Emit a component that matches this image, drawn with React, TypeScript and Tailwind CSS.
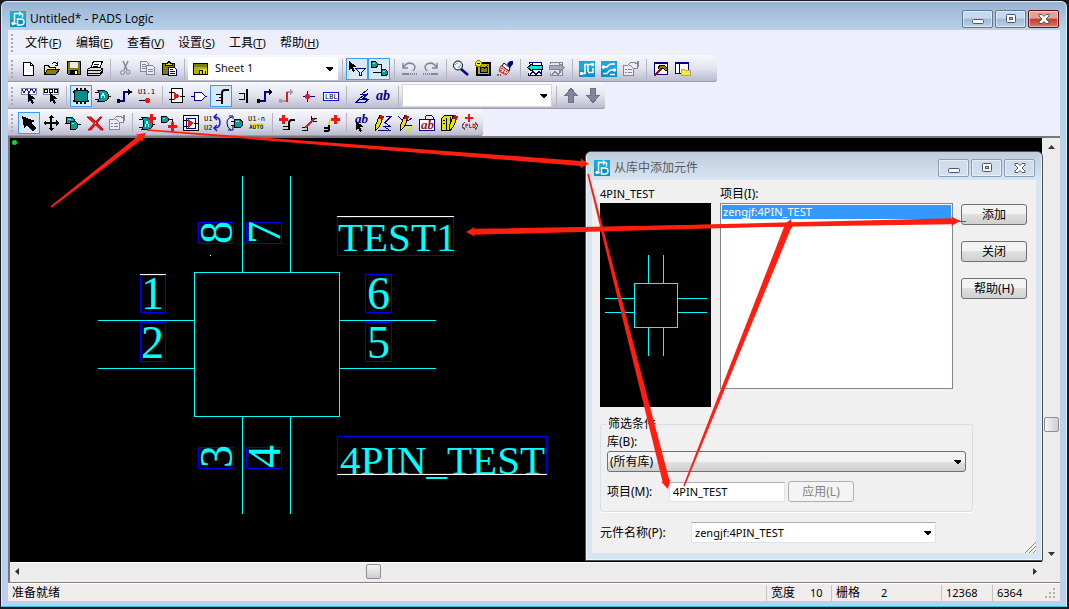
import React from "react";

const K = "#000";
const NAVY = "#00008b";
const RED = "#f01414";
const GREY = "#85859a";
const OLIVE = "#808000";

function Gate({ x, y, w = 9, h = 8 }: { x: number; y: number; w?: number; h?: number }) {
  return (
    <g>
      <path
        d={`M${x + 0.5} ${y + 0.5}h${w / 2}q${w / 2} 0 ${w / 2} ${h / 2}q0 ${h / 2} ${-w / 2} ${h / 2}h${-w / 2}z`}
        fill="#00a0a0"
        stroke={K}
      />
      <path d={`M${x + 2} ${y + 2}h${w / 3}`} stroke="#7ff0f0" />
    </g>
  );
}

function Plus({ x, y, c = RED }: { x: number; y: number; c?: string }) {
  return <path d={`M${x - 4} ${y + 0.5}h9M${x + 0.5} ${y - 4}v9`} stroke={c} strokeWidth="3" fill="none" />;
}

function Cursor({ x, y }: { x: number; y: number }) {
  return <path d={`M${x} ${y}v9l2 -2l2 4l2 -1l-2 -4h4z`} fill={K} />;
}

function Pencil({ x, y }: { x: number; y: number }) {
  return (
    <g transform={`translate(${x} ${y})`}>
      <path d="M4.500 .5l4 1l-4 10l-4 4v-5z" fill="#e8e000" stroke={K} />
      <path d="M5 0l4 1l-1 4l-4 -1z" fill="#c01010" />
      <path d="M0 16v-3l2 1z" fill={K} />
    </g>
  );
}

function Props() {
  return (
    <g fill="none" stroke={GREY}>
      <path d="M1.500 5.500h10v10h-10z" fill="#ececf4" />
      <path d="M3 9.500h2m1 0h4M3 12.500h2m1 0h4" />
      <path d="M5 6l4 -4h3l3 2v4h-4l-3 -3" fill="#ececf4" />
      <path d="M16 1v6" strokeWidth="2" />
    </g>
  );
}

function Tile({ children }: { children?: React.ReactNode }) {
  return (
    <g shapeRendering="auto">
      <rect x="1" y="1" width="16" height="16" fill="#14a8dc" />
      <rect x="1" y="10" width="16" height="7" fill="#0a90c4" />
      <g stroke="#fff" fill="none" strokeWidth="1.500">{children}</g>
    </g>
  );
}

function Logo() {
  return (
    <Tile>
      <path d="M5.500 12V3.500H12M2 13.500h5M13.500 3.500v4" />
      <path d="M8.500 9h3q3.500 0 3.500 3q0 3 -3.500 3h-3z" />
      <path d="M10 1l3.500 2.500L10 6zM3 11.500l5 2l-5 2z" fill="#fff" strokeWidth="0" />
    </Tile>
  );
}

const icons: Record<string, React.ReactNode> = {
  New: <path d="M3.500 2.500h7l3 3v10h-10zM10.500 2.500v3h3" fill="#fff" stroke={K} />,
  Open: (
    <g stroke={K}>
      <path d="M2.500 14.500v-9h4l1 2h6v2" fill="#f0ec80" />
      <path d="M2.500 14.500l3 -5h12l-4 5z" fill={OLIVE} />
      <path d="M10 4q3 -3 5 0M15.500 2v3h-3" fill="none" />
    </g>
  ),
  Save: (
    <g>
      <path d="M3.500 1.500h13v13h-12l-1 -1z" fill={OLIVE} stroke={K} />
      <rect x="6" y="2" width="8" height="6" fill="#e8e8e8" />
      <rect x="6" y="10" width="8" height="5" fill={K} />
      <rect x="11" y="11" width="2" height="3" fill="#fff" />
    </g>
  ),
  Print: (
    <g stroke={K}>
      <path d="M4.500 8l3 -6.500h9l-3 6.500" fill="#fff" />
      <path d="M8 4.500h5M7 6.500h5" />
      <path d="M1.500 9.500l3 -2h10l2 2v3l-3 3h-12z" fill="#dcdcdc" />
      <path d="M2 10.500h12l3 -2M2 13.500h12l3 -3" fill="none" />
      <rect x="9" y="11" width="3" height="1" fill="#e8e000" stroke="none" />
    </g>
  ),
  Cut: (
    <g stroke={GREY} fill="none" shapeRendering="auto">
      <path d="M7 1l4 9M12 1l-4 9" strokeWidth="1.500" />
      <circle cx="6.500" cy="12.500" r="2" />
      <circle cx="12" cy="12" r="2" />
    </g>
  ),
  Copy: (
    <g stroke={GREY} fill="#ececf4">
      <path d="M2.500 1.500h6l2 2v8h-8zM4 4.500h4M4 6.500h4M4 8.500h4" />
      <path d="M8.500 5.500h6l2 2v7h-8zM10 9.500h5M10 11.500h5" />
    </g>
  ),
  Paste: (
    <g>
      <path d="M2.500 3.500h12v11h-12z" fill={OLIVE} stroke={K} />
      <path d="M5.500 5.500v-2h2l1 -2h1l1 2h2v2z" fill="#e8e000" stroke={K} />
      <path d="M8.500 7.500h6l2 2v6h-8z" fill="#fff" stroke={NAVY} />
      <path d="M10 9.500h3M10 11.500h5M10 13.500h5" stroke={NAVY} />
    </g>
  ),
  Sheet: (
    <g>
      <rect x="1.500" y="3.500" width="14" height="11" fill="#b0b000" stroke={K} />
      <path d="M2 4h13v3H2z" fill={OLIVE} />
      <path d="M7 9h8v5H7z" fill="#e8e000" />
      <path d="M7.500 14v-3.500h3v3.500M13.500 14v-3" stroke={K} fill="none" />
    </g>
  ),
  Filter: (
    <g>
      <Cursor x={1} y={1} />
      <path d="M7.500 8.500h10l-4 4v3h-2v-3z" fill="#d8f4f8" stroke={NAVY} />
    </g>
  ),
  "Select gates": (
    <g>
      <Gate x={1} y={1} w={6} h={6} />
      <path d="M8 4.500h3.500v8M3 12.500h9" stroke={K} fill="none" />
      <Gate x={11} y={9} w={6} h={6} />
    </g>
  ),
  Undo: (
    <g stroke={GREY} fill="none">
      <path d="M3 3v5h5M3 8q4 -7 10 -4q4 3 0 7" strokeWidth="1.500" shapeRendering="auto" />
      <path d="M2 14h7" strokeWidth="2" />
      <path d="M10 14h8" strokeWidth="2" strokeDasharray="1 1" />
    </g>
  ),
  Redo: (
    <g stroke={GREY} fill="none">
      <path d="M15 3v5h-5M15 8q-4 -7 -10 -4q-4 3 0 7" strokeWidth="1.500" shapeRendering="auto" />
      <path d="M9 14h7" strokeWidth="2" />
      <path d="M1 14h8" strokeWidth="2" strokeDasharray="1 1" />
    </g>
  ),
  Zoom: (
    <g shapeRendering="auto">
      <path d="M9 9l7 6" stroke={NAVY} strokeWidth="2.500" />
      <circle cx="6" cy="5.500" r="4.500" fill="#dffafa" stroke={K} />
      <path d="M3 5l2 -2M6 8l3 -3" stroke="#12c8d0" />
    </g>
  ),
  "Zoom board": (
    <g>
      <rect x="3" y="3" width="13" height="12" fill="#b8b000" stroke={K} strokeWidth="2" />
      <rect x="6.500" y="7.500" width="7" height="5" fill={OLIVE} stroke={K} />
      <path d="M10 9l4 -4" stroke={K} />
      <circle cx="4.500" cy="3.500" r="3" fill="#ffee00" stroke={OLIVE} />
      <path d="M3 3.500h3" stroke={K} />
    </g>
  ),
  Redraw: (
    <g shapeRendering="auto">
      <path d="M11 4l3 -3h3v3l-3 4z" fill={NAVY} />
      <path d="M8 3l6 5l-1 3l-7 -5z" fill="#fff" stroke={K} />
      <path d="M5 5.500l8 6l-3 3.500l-7 -4z" fill="#fff" stroke="#a03030" />
      <path d="M5 8l6 4M4 10l6 4M1 15l4 0" stroke={RED} strokeWidth="1.500" strokeDasharray="2 1" />
    </g>
  ),
  Previous: (
    <g>
      <path d="M3.500 3.500v-1h12v13h-13v-3M4 14.500l3 -3l3 3l3 -3l3 3" fill="#fff" stroke={NAVY} />
      <path d="M1.500 7.500l5 -4v2h10v4h-10v2z" fill="#00e5ee" stroke={K} />
    </g>
  ),
  Next: (
    <g>
      <path d="M2.500 3.500v-1h12v13h-12v-3M4 14.500l3 -3l3 3l3 -3" fill="#e3e3ee" stroke={GREY} />
      <path d="M16.500 7.500l-5 -4v2h-10v4h10v2z" fill="#a8a8b6" stroke={GREY} />
    </g>
  ),
  Layout: (
    <Tile>
      <path d="M3 13.500h4V4.500M10 12V4.500h5M6 4.500h3M10 12.500h5V8" />
      <circle cx="3.500" cy="13.500" r="1" fill="#fff" />
      <circle cx="14.500" cy="4.500" r="1" fill="#fff" />
    </Tile>
  ),
  Router: (
    <Tile>
      <path d="M3 7h4q2 -3 5 -3h3M3 13.500h4q2 -3.500 5 -3.500h3M10 14.500h5" />
      <circle cx="3.500" cy="7" r="1" fill="#fff" />
      <circle cx="14.500" cy="10" r="1" fill="#fff" />
    </Tile>
  ),
  Properties: <Props />,
  Tools: (
    <g>
      <rect x="2.500" y="2.500" width="13" height="12" fill="#fff" stroke={NAVY} />
      <path d="M2 3h14" stroke={NAVY} strokeWidth="2" />
      <path d="M6 8l2 -3h4l3 3v2h-2l-2 -2l-3 2z" fill={OLIVE} stroke={K} />
      <path d="M9 9l-7 7" stroke="#8b1010" strokeWidth="2" />
    </g>
  ),
  Output: (
    <g>
      <rect x="1.500" y="2.500" width="13" height="11" fill="#fff" stroke={NAVY} />
      <path d="M1 3h14" stroke={NAVY} strokeWidth="2" />
      <path d="M5.500 4v9" stroke={NAVY} />
      <path d="M7.500 15.500v-6h3l1 1h5v5z" fill="#ffe92e" stroke="#a8a878" />
    </g>
  ),
  "Select nets": (
    <g>
      <rect x="1.500" y="1.500" width="15" height="6" fill="#fff" stroke={GREY} />
      <path d="M2 2l2 4l2 -4h1l2 4l2 -4h1l2 4l2 -4" fill="none" stroke="#1010e0" />
      <Cursor x={8} y={6} />
    </g>
  ),
  "Select parts": (
    <g>
      <rect x="1.500" y="1.500" width="15" height="6" fill="#fff" stroke={GREY} />
      <path d="M2.500 2.500h3v3h-3zM7.500 2.500h3v3h-3zM12.500 2.500h3v3h-3z" fill="#fff" stroke={K} />
      <Cursor x={8} y={6} />
    </g>
  ),
  Part: (
    <g>
      <path d="M4.500 1v16M8.500 1v16M12.500 1v16M1 4.500h16M1 13.500h16" stroke={K} strokeWidth="2" />
      <rect x="2.500" y="3.500" width="13" height="11" fill="#008f8f" stroke={K} />
    </g>
  ),
  "Gate symbol": (
    <g>
      <path d="M1 5.500h4M1 12.500h4M13 9.500h4" stroke={K} />
      <path d="M3.500 3.500h6q5 1 5 5.500q0 5 -5 5.500h-6l2 -3v-5z" fill="#00a0a0" stroke={K} />
      <path d="M7 11l2 -5l2 5" fill="none" stroke="#bff" />
    </g>
  ),
  Net: (
    <g>
      <path d="M2 14h6V5h8" fill="none" stroke={NAVY} strokeWidth="2" />
      <path d="M1 12h3v4h-3zM12 2l4 3l-4 3z" fill={K} />
    </g>
  ),
  Pin: (
    <g>
      <text x="0" y="7" fontSize="7" fontFamily="DejaVu Sans Mono, monospace" fill={K}>U1.1</text>
      <path d="M1 13.500h8" stroke={K} />
      <circle cx="9.500" cy="13.500" r="2.500" fill={RED} />
    </g>
  ),
  "Hierarchical part": (
    <g>
      <path d="M3.500 1.500h11v14h-11z" fill="#fff" stroke={K} />
      <path d="M6 5l6 4l-6 4z" fill={RED} />
      <path d="M1 5.500h5M1 12.500h5M12 9.500h5" stroke={K} />
    </g>
  ),
  Port: <path d="M1 9.500h3M4.500 5.500h7l4 4l-4 4h-7zM15 9.500h2" fill="#fff" stroke={NAVY} />,
  Bus: (
    <g fill="none" stroke={K}>
      <path d="M10 17V6q0 -3 3 -3h4" strokeWidth="2" shapeRendering="auto" />
      <path d="M4 7.500h5M4 13.500h5M7 10.500h2" />
    </g>
  ),
  "Bus pins": (
    <g fill="none" stroke={K}>
      <path d="M13 2v14" strokeWidth="2" />
      <path d="M5 6.500h5v6h-5" />
    </g>
  ),
  Connection: (
    <g>
      <path d="M3 14h6V5h6" fill="none" stroke={NAVY} strokeWidth="2" />
      <path d="M1 12h3v4h-3zM13 2l4 3l-4 3z" fill={K} />
    </g>
  ),
  Segment: (
    <g>
      <path d="M2 14h6M9 5h5" fill="none" stroke="#a0a0a8" strokeWidth="2" />
      <path d="M9 5v10" stroke={RED} strokeWidth="2" />
      <path d="M1 12h3v4h-3zM12 2l4 3l-4 3z" fill="#a0a0a8" />
    </g>
  ),
  Junction: (
    <g>
      <path d="M3 9.500h12M7.500 4v11" stroke={NAVY} />
      <circle cx="7.500" cy="9.500" r="2.500" fill={RED} />
    </g>
  ),
  Label: (
    <g>
      <rect x="1.500" y="5.500" width="15" height="8" fill="#fff" stroke="#1010e0" />
      <text x="3" y="12" fontSize="7" fontFamily="DejaVu Sans Mono, monospace" fill={K}>LBL</text>
    </g>
  ),
  "Drawing item": (
    <path d="M3 15.500h10l3 -3h-9l-3 3M7 11.500l7 -4h-5l7 -5M16 6.500l-5 5h4" fill="none" stroke={NAVY} />
  ),
  Text: (
    <text x="2" y="13" fontSize="14" fontStyle="italic" fontWeight="700" fontFamily="Liberation Serif, serif" fill={NAVY}>ab</text>
  ),
  Up: <path d="M9 1.500l6.500 7h-4v7h-5v-7h-4z" fill={GREY} stroke="#70708a" />,
  Down: <path d="M9 15.500l6.500 -7h-4v-7h-5v7h-4z" fill={GREY} stroke="#70708a" />,
  Select: <path d="M2 2l2 12l3 -2l6 5l3 -3l-5 -5l4 -2z" fill={K} />,
  Move: (
    <g fill={K}>
      <path d="M8 3h2v12h-2zM3 8h12v2h-12z" />
      <path d="M9 1l3 3h-6zM9 17l3 -3h-6zM1 9l3 -3v6zM17 9l-3 -3v6z" />
    </g>
  ),
  Duplicate: (
    <g>
      <Gate x={2} y={3} w={8} h={6} />
      <Gate x={6} y={7} w={7} h={8} />
      <path d="M1 9.500h5M13 10.500h4" stroke={K} />
    </g>
  ),
  Delete: <path d="M1 3h4l12 12v1h-2zM16 3h-2l-12 13h3z" fill={RED} stroke="#c01010" shapeRendering="auto" />,
  "Add part": (
    <g>
      <path d="M1 5.500h4M1 13.500h4M13 10.500h4" stroke={K} />
      <path d="M3.500 3.500h5q6 1 6 6q0 6 -6 6h-5l2 -3v-6z" fill="#00a0a0" stroke={K} />
      <path d="M7 13l2 -6l2 6" fill="none" stroke="#bff" />
      <Plus x={13} y={4} />
    </g>
  ),
  "Add connection": (
    <g>
      <Gate x={1} y={2} w={7} h={6} />
      <path d="M9 5.500h3.500v4" fill="none" stroke={K} />
      <Plus x={12} y={12} />
    </g>
  ),
  "Add hierarchical": (
    <g>
      <path d="M1.500 1.500h15v15h-15z" fill="#d8ffff" stroke={K} />
      <path d="M4.500 4.500h9v10h-9z" fill="#fff" stroke={NAVY} />
      <path d="M6 5l6 4l-6 5z" fill={RED} />
      <path d="M1 6.500h5M1 12.500h5M12 9.500h5" stroke={K} />
    </g>
  ),
  "Swap refs": (
    <g>
      <text x="0" y="7" fontSize="7" fontFamily="DejaVu Sans Mono, monospace" fill={K}>U1</text>
      <text x="0" y="16" fontSize="7" fontFamily="DejaVu Sans Mono, monospace" fill={K}>U2</text>
      <path d="M10 3q6 0 6 5q0 6 -5 6M13 11l-3 3l3 3M13 0l-3 3l3 3" fill="none" stroke="#2020b8" strokeWidth="1.500" shapeRendering="auto" />
    </g>
  ),
  "Swap pins": (
    <g>
      <path d="M6 3q-5 1 -5 6q0 5 4 7M3 2h4v3M2 16h5v-4" fill="none" stroke={NAVY} shapeRendering="auto" />
      <Gate x={8} y={5} w={8} h={8} />
      <path d="M5 7.500h4M5 11.500h4" stroke={K} />
    </g>
  ),
  Renumber: (
    <g>
      <text x="0" y="7" fontSize="7" fontFamily="DejaVu Sans Mono, monospace" fill={K}>U1-n</text>
      <rect x="1" y="9" width="15" height="7" fill="#ffee00" />
      <text x="1" y="15" fontSize="6" fontWeight="700" fontFamily="DejaVu Sans Mono, monospace" fill="#1010e0">AUTO</text>
    </g>
  ),
  "Add bus": (
    <g>
      <path d="M11 16V9q0 -3 3 -3h3" fill="none" stroke={K} strokeWidth="2" shapeRendering="auto" />
      <path d="M5 12.500h5M5 15.500h5" stroke={K} />
      <Plus x={5} y={5} />
    </g>
  ),
  "Split bus": (
    <g>
      <path d="M11.500 2v5h5M12 4.500h5M7.500 17v-5M2 13.500h5M2 16.500h5" fill="none" stroke={K} />
      <path d="M5 14l9 -9" stroke={RED} strokeWidth="2" />
    </g>
  ),
  "Extend bus": (
    <g>
      <path d="M7 17v-6M2 13.500h5M2 16.500h5" fill="none" stroke={K} strokeWidth="2" />
      <path d="M7 11q0 -6 6 -6" fill="none" stroke="#e8e000" strokeWidth="2" />
      <Plus x={13} y={5} />
    </g>
  ),
  "Edit text": (
    <g>
      <text x="3" y="9" fontSize="13" fontStyle="italic" fontWeight="700" fontFamily="Liberation Serif, serif" fill={NAVY}>ab</text>
      <Cursor x={4} y={7} />
    </g>
  ),
  "Draw line": (
    <g>
      <path d="M4 16.500h12l-6 -4h6l-5 -4l6 -6h-5" fill="none" stroke={NAVY} />
      <Pencil x={1} y={1} />
    </g>
  ),
  "Modify line": (
    <g>
      <path d="M2 2l5 5M8 9l8 -5M8 11.500h8" fill="none" stroke={NAVY} />
      <path d="M10 16q6 0 6 -4" fill="none" stroke="#e8e000" strokeWidth="2" />
      <Pencil x={4} y={1} />
    </g>
  ),
  "Lock text": (
    <g>
      <path d="M7 5v-2l2 -2h4l2 2v2" fill="none" stroke={NAVY} />
      <rect x="1.500" y="5.500" width="15" height="11" fill="#fff" stroke={NAVY} />
      <text x="3" y="15" fontSize="13" fontStyle="italic" fontWeight="700" fontFamily="Liberation Serif, serif" fill="#a01020">ab</text>
    </g>
  ),
  Library: (
    <g>
      <path d="M1.500 4.500l3 -3h8v12l-2 3h-9z" fill="#e8e000" stroke={K} />
      <path d="M6.500 4v12M10.500 3v12M3 6.500h2M3 9.500h2" stroke={K} />
      <Pencil x={9} y={1} />
    </g>
  ),
  "Add field": (
    <g>
      <path d="M7 0v8M3 4h8" stroke={RED} strokeWidth="2" />
      <path d="M3 8l-3 4l3 4M13 8l3 4l-3 4" fill="none" stroke="#804040" />
      <text x="3" y="14" fontSize="6" fontWeight="700" fontFamily="DejaVu Sans Mono, monospace" fill="#a01020">FLD</text>
    </g>
  ),
};

function Icon({ name }: { name: string }) {
  return (
    <svg width="18" height="18" viewBox="0 0 18 18" shapeRendering="crispEdges" className="block shrink-0 overflow-visible" fill="none" aria-hidden="true">
      {icons[name]}
    </svg>
  );
}

function Tool({ name, on = false }: { name: string; on?: boolean }) {
  return (
    <button
      type="button"
      aria-label={name}
      className={
        on
          ? "flex h-[22px] w-[22px] items-center justify-center border border-[#3c9cf0] bg-[#d6e8fa]"
          : "flex h-[22px] w-[22px] items-center justify-center"
      }
    >
      <Icon name={name} />
    </button>
  );
}

function Sep() {
  return (
    <span className="flex h-5 w-2 justify-center">
      <span className="w-px bg-[#b4b4c0]" />
    </span>
  );
}

function Grip() {
  return (
    <span className="mr-[4px] flex w-[3px] flex-col gap-[2px]">
      {[0, 1, 2, 3, 4].map((i) => (
        <span key={i} className="h-[2px] w-[2px] bg-[#a9a9b8]" />
      ))}
    </span>
  );
}

function Group({ names, active = [] }: { names: string[]; active?: string[] }) {
  return (
    <div className="flex">
      {names.map((n) => (
        <Tool key={n} name={n} on={active.includes(n)} />
      ))}
    </div>
  );
}

function Bar({ children, end = false }: { children: React.ReactNode; end?: boolean }) {
  return (
    <div
      className={
        "flex h-[27px] w-max items-center rounded-r-[3px] bg-gradient-to-b from-[#f8f9fd] via-[#e2e3ee] to-[#b8b8cc] pl-[3px] shadow-[inset_0_-1px_0_#9a9aae] " +
        (end ? "pr-[23px]" : "pr-px")
      }
    >
      {children}
    </div>
  );
}

function Caret() {
  return (
    <svg width="7" height="4" viewBox="0 0 7 4" shapeRendering="crispEdges" className="pointer-events-none absolute right-[5px] top-1/2 -mt-[2px]" aria-hidden="true">
      <path d="M0 0h7v1L4 4H3L0 1z" fill={K} />
    </svg>
  );
}

function CaptionButtons({ active }: { active: boolean }) {
  const base = "flex h-[18px] w-[31px] items-center justify-center rounded-[2px] border shadow-[inset_0_0_0_1px_rgba(255,255,255,0.5)]";
  const plain = active
    ? " border-[#5d7896] bg-gradient-to-b from-[#c6d8ea] from-45% via-[#9db9d5] via-50% to-[#b9d3ea]"
    : " border-[#8c9db4] bg-gradient-to-b from-[#cfdbe8] to-[#d4e0ee]";
  const close = active
    ? " border-[#5a1220] bg-gradient-to-b from-[#e5a297] from-45% via-[#c0392b] via-50% to-[#d97860]"
    : plain;
  return (
    <div className="flex gap-[2px]">
      <button type="button" aria-label="Minimize" className={base + plain}>
        <svg width="12" height="12" viewBox="0 0 12 12"><rect x=".5" y="6.500" width="11" height="4" rx="1" fill="#fff" stroke="#4d566b" /></svg>
      </button>
      <button type="button" aria-label="Restore" className={base + plain}>
        <svg width="12" height="12" viewBox="0 0 12 12">
          <rect x="1.500" y="1.500" width="9" height="8" rx="1" fill="#fff" stroke="#4d566b" />
          <rect x="4.500" y="4.500" width="3" height="2" fill="#b8c8dc" stroke="#4d566b" />
        </svg>
      </button>
      <button type="button" aria-label="Close" className={base + close}>
        <svg width="12" height="12" viewBox="0 0 12 12">
          <path d="M1 1.500h3l2 2l2 -2h3v1.500l-3 3l3 3v1.500h-3l-2 -2l-2 2h-3v-1.500l3 -3l-3 -3z" fill="#fff" stroke="#4d566b" />
        </svg>
      </button>
    </div>
  );
}

const menus: [string, string][] = [
  ["文件", "F"],
  ["编辑", "E"],
  ["查看", "V"],
  ["设置", "S"],
  ["工具", "T"],
  ["帮助", "H"],
];

function Schematic() {
  const digits: [string, number, number][] = [
    ["1", 141, 309],
    ["2", 141, 358],
    ["6", 367, 309],
    ["5", 367, 358],
  ];
  const turned: [string, number, number][] = [
    ["8", 232, 244],
    ["7", 280, 244],
    ["3", 232, 468],
    ["4", 280, 468],
  ];
  return (
    <svg className="absolute inset-0 h-full w-full" aria-label="Schematic">
      <g transform="translate(-10 -138)" fontFamily="Liberation Serif, serif">
        <circle cx="14.500" cy="142.500" r="2.500" fill="#00e020" />
        <rect x="210" y="255" width="1" height="1" fill="#fff" />
        <g fill="none" stroke="#0000f0">
          <path d="M140.500 275.500h25v37h-25zM140.500 322.500h25v39h-25zM365.500 274.500h26v38h-26zM365.500 322.500h26v39h-26z" />
          <path d="M198.500 222.500h35v21h-35zM246.500 222.500h35v21h-35zM198.500 447.500h35v21h-35zM246.500 447.500h35v21h-35z" />
          <path d="M337.500 217.500h116v38h-116zM337.500 436.500h209v37h-209z" />
        </g>
        <path d="M140 274.500h26M337 216.500h117M337 474.500h210" stroke="#fff" />
        <g fill="none" stroke="#00ffff">
          <rect x="194.500" y="272.500" width="145" height="144" />
          <path d="M242.500 176v96M290.500 176v96M242.500 417v97M290.500 417v97M98 320.500h96M98 368.500h96M340 320.500h96M340 368.500h96" />
        </g>
        <g fill="#00ffff" fontSize="46">
          {digits.map(([t, x, y]) => (
            <text key={t} x={x} y={y}>{t}</text>
          ))}
          {turned.map(([t, x, y]) => (
            <text key={t} transform={`translate(${x} ${y}) rotate(-90)`}>{t}</text>
          ))}
        </g>
        <g fill="#00ffff" fontSize="41">
          <text x="338" y="251">TEST1</text>
          <text x="340" y="474">4PIN_TEST</text>
        </g>
      </g>
    </svg>
  );
}

function arrow(x1: number, y1: number, x2: number, y2: number, w: number) {
  const len = Math.hypot(x2 - x1, y2 - y1);
  const ux = (x2 - x1) / len;
  const uy = (y2 - y1) / len;
  const at = (d: number, s: number) => `${x1 + ux * d - uy * s},${y1 + uy * d + ux * s}`;
  const neck = len - 8;
  return [at(0, 0.8), at(neck, w / 2), at(neck - 1, 5), at(len, 0), at(neck - 1, -5), at(neck, -w / 2), at(0, -0.8)].join(" ");
}

function Arrows() {
  return (
    <svg className="pointer-events-none absolute inset-0 h-full w-full" fill="#ff1e10" aria-hidden="true">
      <polygon points={arrow(51, 207, 146, 133, 5)} />
      <polygon points={arrow(147, 130, 589, 164, 5)} />
      <polygon points={arrow(588, 174, 668, 489, 7)} />
      <polygon points={arrow(684, 486, 791, 219, 7)} />
      <polygon points={arrow(960, 221, 466, 232, 6)} />
      <polygon points={arrow(560, 229, 960, 221, 6)} />
      <path d="M958 221.500h8" stroke="#ff1e10" />
    </svg>
  );
}

const pushButton =
  "h-[21px] w-[66px] rounded-[3px] border text-center text-[12px] leading-[19px] bg-gradient-to-b from-50% via-50%";
const live = " border-[#707070] from-[#f3f3f3] via-[#e0e0e0] to-[#d0d0d0]";
const dead = " border-[#adb2b5] from-[#f4f4f4] via-[#f4f4f4] to-[#f4f4f4] text-[#838383]";

function Dialog() {
  return (
    <section
      aria-label="从库中添加元件"
      className="absolute left-[585px] top-[151px] flex w-[458px] flex-col rounded-t-[6px] border border-[#4a5058] bg-[#d7e4f2] px-[6px] pb-[7px] text-[12px] text-black shadow-[inset_0_0_0_1px_rgba(255,255,255,0.6)]"
    >
      <header className="-mx-[5px] flex h-[28px] items-center rounded-t-[5px] bg-gradient-to-b from-[#bfccda] to-[#d7e4f2] px-[6px] pt-[4px]">
        <svg width="18" height="18" viewBox="0 0 18 18" aria-hidden="true"><Logo /></svg>
        <h2 className="ml-[3px] flex-1 text-[12px] leading-4 text-[#555b63]">从库中添加元件</h2>
        <CaptionButtons active={false} />
      </header>
      <div className="bg-[#f0f0f0] px-[8px] pb-[10px] pt-[5px]">
        <div className="flex">
          <div className="w-[111px]">
            <p className="h-[18px] text-[11px] leading-[18px]">4PIN_TEST</p>
            <svg className="block h-[204px] w-full bg-black" aria-label="Part preview">
              <g fill="none" stroke="#00ffff">
                <rect x="34.500" y="80.500" width="43" height="44" />
                <path d="M48.500 52v28M63.500 52v28M48.500 125v28M63.500 125v28M5 95.500h29M5 109.500h29M78 95.500h29M78 109.500h29" />
              </g>
            </svg>
          </div>
          <div className="ml-[9px] w-[233px]">
            <p className="h-[18px] leading-[18px]" id="items-label">项目(I):</p>
            <ul role="listbox" aria-labelledby="items-label" className="h-[186px] border border-[#82878f] bg-white p-px">
              <li role="option" aria-selected="true" className="h-[14px] bg-[#3399ff] px-px text-[11px] leading-[14px] text-white">
                zengjf:4PIN_TEST
              </li>
            </ul>
          </div>
          <div className="ml-[8px] flex flex-col gap-4 pt-[19px]">
            <button type="button" className={pushButton + live}>添加</button>
            <button type="button" className={pushButton + live}>关闭</button>
            <button type="button" className={pushButton + live}>帮助(H)</button>
          </div>
        </div>
        <fieldset className="mr-[55px] mt-[9px] rounded-[3px] border border-[#d5dfe5] px-[6px] pb-[9px] shadow-[0_1px_0_#fff]">
          <legend className="h-4 px-px leading-4">筛选条件</legend>
          <label htmlFor="lib" className="mt-[2px] block h-[17px] leading-4">库(B):</label>
          <div className="relative">
            <select
              id="lib"
              className="block h-[21px] w-full appearance-none rounded-[3px] border border-[#707070] bg-gradient-to-b from-[#f2f2f2] from-50% via-[#e2e2e2] via-50% to-[#cfcfcf] px-[2px] text-[12px] leading-[19px]"
            >
              <option>(所有库)</option>
            </select>
            <Caret />
          </div>
          <div className="mt-[9px] flex items-center">
            <label htmlFor="item" className="w-[62px]">项目(M):</label>
            <input id="item" defaultValue="4PIN_TEST" className="h-[20px] w-[116px] border border-[#dfe3ea] border-t-[#abadb3] bg-white px-[3px] text-[11px]" />
            <button type="button" disabled className={pushButton + dead + " ml-[3px]"}>
              应用(L)
            </button>
          </div>
        </fieldset>
        <div className="mt-[10px] flex items-center">
          <label htmlFor="part" className="w-[91px]">元件名称(P):</label>
          <div className="relative w-[245px]">
            <select id="part" className="block h-[21px] w-full appearance-none border border-[#dfe3ea] border-t-[#abadb3] bg-white px-[3px] text-[11px] leading-[19px]">
              <option>zengjf:4PIN_TEST</option>
            </select>
            <Caret />
          </div>
        </div>
      </div>
      <svg width="12" height="12" viewBox="0 0 12 12" className="absolute bottom-[7px] right-[6px]" aria-hidden="true">
        <path d="M1 12L12 1M5 12l7 -7M9 12l3 -3" stroke="#8a8a8a" />
      </svg>
    </section>
  );
}

const cell = "flex h-full items-center border-l border-[#c8c4c4] pl-[4px]";

export default function App() {
  return (
    <div className="relative flex min-h-screen flex-col bg-[#1b1b22] pb-[2px] pl-px pr-[2px] pt-px font-['Noto_Sans','Noto_Sans_CJK_SC',sans-serif] text-[12px] text-black">
      <div className="flex flex-1 flex-col rounded-t-[6px] border border-[#d5effa] border-b-[#3ec0d8] bg-[#b9d1ea] px-[6px] pb-[5px]">
        <header className="-mx-[6px] flex h-[28px] items-center rounded-t-[5px] bg-gradient-to-b from-[#98b3d2] to-[#b9d1ea] px-[7px] pt-[5px]">
          <svg width="18" height="18" viewBox="0 0 18 18" aria-hidden="true"><Logo /></svg>
          <h1 className="ml-[3px] flex-1 font-['Open_Sans','Noto_Sans_CJK_SC',sans-serif] text-[12px] leading-4">Untitled* - PADS Logic</h1>
          <CaptionButtons active />
        </header>
        <main className="flex flex-1 flex-col bg-[#eeeffc]">
          <nav className="flex h-[25px] items-center pl-[3px]">
            <Grip />
            <div className="ml-[7px] flex">
              {menus.map(([label, key]) => (
                <button key={key} type="button" className="w-[51px] whitespace-nowrap text-left leading-4">
                  {label}
                  <span className="text-[11px]">(<span className="underline">{key}</span>)</span>
                </button>
              ))}
            </div>
          </nav>
          <div className="flex flex-col">
            <Bar end>
              <Grip />
              <Group names={["New", "Open", "Save", "Print"]} />
              <Sep />
              <Group names={["Cut", "Copy", "Paste"]} />
              <Sep />
              <div className="relative flex h-[23px] w-[150px] items-center bg-white pl-[4px]">
                <Icon name="Sheet" />
                <select aria-label="Sheet" className="h-full flex-1 appearance-none bg-transparent pl-[5px] font-['Open_Sans',sans-serif] text-[11px]">
                  <option>Sheet 1</option>
                </select>
                <Caret />
              </div>
              <Sep />
              <Group names={["Filter", "Select gates"]} active={["Filter", "Select gates"]} />
              <Sep />
              <Group names={["Undo", "Redo"]} />
              <Sep />
              <Group names={["Zoom", "Zoom board", "Redraw"]} />
              <Sep />
              <Group names={["Previous", "Next"]} />
              <Sep />
              <Group names={["Layout", "Router", "Properties"]} />
              <Sep />
              <Group names={["Tools", "Output"]} />
            </Bar>
            <Bar>
              <Grip />
              <Group names={["Select nets", "Select parts"]} />
              <Sep />
              <Group names={["Part", "Gate symbol", "Net", "Pin"]} active={["Part"]} />
              <Sep />
              <Group
                names={["Hierarchical part", "Port", "Bus", "Bus pins", "Connection", "Segment", "Junction", "Label"]}
                active={["Bus"]}
              />
              <Sep />
              <Group names={["Drawing item", "Text"]} />
              <Sep />
              <div className="relative w-[150px]">
                <select aria-label="Search" className="block h-[23px] w-full appearance-none border border-[#d4d4de] bg-white px-1 text-[11px]">
                  <option></option>
                </select>
                <Caret />
              </div>
              <Sep />
              <Group names={["Up", "Down"]} />
            </Bar>
            <Bar>
              <Grip />
              <Group names={["Select", "Move", "Duplicate", "Delete", "Properties"]} active={["Select"]} />
              <Sep />
              <Group names={["Add part", "Add connection", "Add hierarchical", "Swap refs", "Swap pins", "Renumber"]} />
              <Sep />
              <Group names={["Add bus", "Split bus", "Extend bus"]} />
              <Sep />
              <Group names={["Edit text", "Draw line", "Modify line", "Lock text", "Library", "Add field"]} />
            </Bar>
          </div>
          <div className="flex flex-1 border-l-2 border-t-2 border-[#77777c] bg-[#f0f0f0]">
            <div className="flex flex-1 flex-col">
              <div className="relative flex-1 bg-black">
                <Schematic />
              </div>
              <div className="flex h-[20px] items-center justify-between border-t border-white bg-[#ececec] px-[5px] pb-[2px]">
                <svg width="4" height="7" viewBox="0 0 4 7" aria-hidden="true"><path d="M4 0v7L0 3.500z" fill="#333" /></svg>
                <div className="flex flex-1 pl-[34%]">
                  <span className="h-[15px] w-[15px] rounded-[2px] border border-[#8e8e94] bg-gradient-to-b from-[#f4f4f4] to-[#cfcfd4]" />
                </div>
                <svg width="4" height="7" viewBox="0 0 4 7" aria-hidden="true"><path d="M0 0v7l4 -3.500z" fill="#333" /></svg>
              </div>
            </div>
            <div className="flex w-[18px] flex-col items-center justify-between bg-[#ececec] pb-[26px] pt-[7px]">
              <svg width="7" height="4" viewBox="0 0 7 4" aria-hidden="true"><path d="M0 4h7L3.500 0z" fill="#333" /></svg>
              <div className="flex flex-1 flex-col justify-end pb-[120px]">
                <span className="h-[15px] w-[15px] rounded-[2px] border border-[#8e8e94] bg-gradient-to-r from-[#f4f4f4] to-[#cfcfd4]" />
              </div>
              <svg width="7" height="4" viewBox="0 0 7 4" aria-hidden="true"><path d="M0 0h7L3.500 4z" fill="#333" /></svg>
            </div>
          </div>
          <footer className="flex h-[19px] items-center border-t border-[#808080] bg-[#f1eded] pl-[4px] pt-[2px] text-[11px] shadow-[inset_0_1px_0_#fff]">
            <span className="flex-1 text-[12px]">准备就绪</span>
            <span className={cell + " w-[65px]"}>
              <span className="w-[39px] text-[12px]">宽度</span>10
            </span>
            <span className={cell + " w-[110px]"}>
              <span className="w-[45px] text-[12px]">栅格</span>2
            </span>
            <span className={cell + " w-[51px]"}>12368</span>
            <span className={cell + " w-[52px]"}>6364</span>
            <svg width="16" height="12" viewBox="0 0 16 12" aria-hidden="true">
              <path d="M9 1h2v2h-2zM9 5h2v2h-2zM5 5h2v2h-2zM9 9h2v2h-2zM5 9h2v2h-2zM1 9h2v2h-2z" fill="#b5b1b1" />
            </svg>
          </footer>
        </main>
      </div>
      <Dialog />
      <Arrows />
    </div>
  );
}
